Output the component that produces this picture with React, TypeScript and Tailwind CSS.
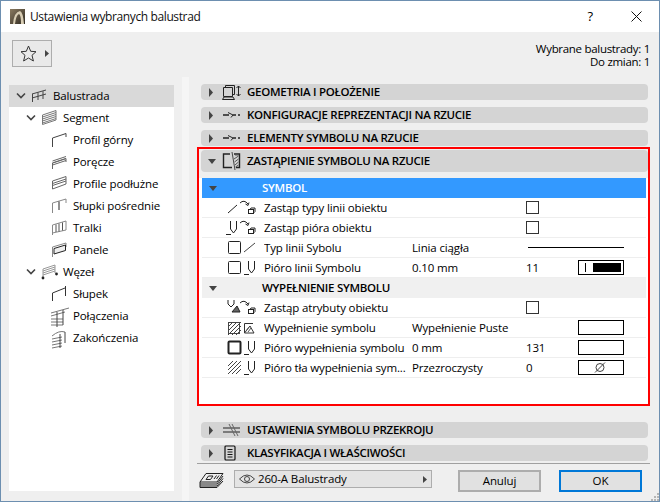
import React from "react";

const FONT = { fontFamily: '"Open Sans","Noto Sans",sans-serif' };

function Chev() {
  return (
    <svg width="10" height="8" viewBox="0 0 10 8" className="block">
      <path d="M1 1.5 L5 5.5 L9 1.5" fill="none" stroke="#444" strokeWidth="1.6" />
    </svg>
  );
}
function TriR() {
  return (
    <svg width="6" height="9" viewBox="0 0 6 9" className="block">
      <path d="M1 0 L5 4.5 L1 9 Z" fill="#444" />
    </svg>
  );
}
function TriD() {
  return (
    <svg width="8" height="5" viewBox="0 0 8 5" className="block">
      <path d="M0 0 H8 L4 5 Z" fill="#444" />
    </svg>
  );
}

const treeIcons: Record<string, React.ReactNode> = {
  balustrada: (
    <g stroke="#444" fill="none">
      <path d="M1 7 L15 3 M1 11 L15 7 M1.5 15 V7 M7 13 V5.5 M12 12 V4.2" />
    </g>
  ),
  segment: (
    <g stroke="#777" fill="none">
      <path d="M1.5 6 L15 1.5 V11 L1.5 15.5 Z" />
      <path d="M1.5 8 L15 3.5 M1.5 10 L15 5.5 M1.5 12 L15 7.5 M1.5 14 L15 9.5" />
    </g>
  ),
  profil: <path d="M1.5 16 V7 L15 2.5 V6" stroke="#444" fill="none" />,
  porecze: (
    <g stroke="#666" fill="none">
      <path d="M1.5 16 V10 L15 5.5 V9 M1.5 8 L15 3.5 M1.5 10 L15 5.5 M1.5 12 L15 7.5" />
    </g>
  ),
  podluzne: (
    <g stroke="#666" fill="none">
      <path d="M1.5 6 L15 1.5 V9 L1.5 14 Z M1.5 8.5 L15 4 M1.5 10.5 L15 6" />
    </g>
  ),
  slupki: (
    <g stroke="#666" fill="none">
      <path d="M1.5 16 V6 L15 2 V6" stroke="#888" />
      <path d="M8 4.5 V13" stroke="#222" />
    </g>
  ),
  tralki: (
    <g stroke="#555" fill="none">
      <path d="M1.5 16 V6 L15 2 V11 L1.5 14" stroke="#888" />
      <path d="M5 5.5 V13 M8 4.5 V12.5 M11.5 3.5 V11.5" />
    </g>
  ),
  panele: (
    <g fill="none">
      <path d="M1.5 16 V6 L15 2 V6" stroke="#888" />
      <path d="M3 7.5 L14.5 4 V9.5 L3 13 Z" stroke="#222" fill="#eee" />
    </g>
  ),
  wezel: (
    <g>
      <g stroke="#999" fill="none">
        <path d="M2 14 V6 L14 2 V10 M2 8 L14 4 M2 10 L14 6 M2 12 L14 8" />
      </g>
      <circle cx="2" cy="15" r="1.4" fill="#222" />
      <circle cx="15.5" cy="11" r="1.4" fill="#222" />
    </g>
  ),
  slupek: <path d="M1.5 16 V8 M1.5 8 L14 3 M14.5 1 V11" stroke="#333" fill="none" />,
  polaczenia: (
    <g stroke="#777" fill="none">
      <path d="M0 6 L18 1 M0 9 L14 5 M0 12 H12 M0 15 H12 M0 18 H12" />
      <path d="M6 5 V20 M12 3 V18" stroke="#444" />
    </g>
  ),
  zakonczenia: (
    <g stroke="#777" fill="none">
      <path d="M1 7 Q8 1 14 3 M1 10 L11 8 M1 13 L11 11 M1 16 L11 14 M1 19 L11 17" />
      <path d="M9 5 V19 M14 3 V14" stroke="#444" />
    </g>
  ),
};

function TreeRow({ level, open, icon, label, active }: { level: number; open?: boolean; icon: string; label: string; active?: boolean }) {
  const pl = level === 0 ? "pl-[7px]" : level === 1 ? "pl-[17px]" : "pl-[42px]";
  return (
    <div className={`flex h-[22px] items-center text-[11.5px] text-black ${pl} ${active ? "bg-[#d9d9d9]" : ""}`}>
      {open && (
        <span className="flex w-[15px] items-center">
          <Chev />
        </span>
      )}
      <svg width="16" height="18" viewBox="0 0 16 18" className="block overflow-visible">
        {treeIcons[icon]}
      </svg>
      <span className="ml-[6px] tracking-[-0.14px]">{label}</span>
    </div>
  );
}

const headerIcons: Record<string, React.ReactNode> = {
  geo: (
    <g fill="none" stroke="#222">
      <path d="M1.5 3.5 H10.5 V12.5 H1.5 Z M3.5 3.5 V1.5 H12.5 V10.5 H10.5" />
      <path d="M0.5 15.5 L2 13 H11 L12.5 15.5 Z" />
      <path d="M16.5 2 V12 M14.5 4 L16.5 2 L18.5 4 M14.5 10 L16.5 12 L18.5 10" />
    </g>
  ),
  konf: (
    <g fill="none" stroke="#222">
      <path d="M1 8 H7 M11 8 H14 M16 8 H18" strokeWidth="1.3" />
      <path d="M6 5.5 L11 8 L9 10.5" />
    </g>
  ),
  zast: (
    <g fill="none" stroke="#222">
      <path d="M8 4 H1.5 V17.5 H10 M12 4 H17.5 V17.5 H14" strokeWidth="1.4" />
      <path d="M10 2 L13 20" stroke="#222" strokeWidth="0.8" />
      <path d="M13 5 L16.5 5 M12 9 L16.5 6 M12.5 12 L16.5 9 M13 15 L16.5 12 M13.5 17 L16.5 15" stroke="#555" />
    </g>
  ),
  przek: (
    <g fill="none" stroke="#222">
      <path d="M1 6 H18 M1 10 H18" />
      <path d="M7 2 L13 14 M10 2 L16 14" stroke="#666" />
    </g>
  ),
  klas: (
    <g fill="none" stroke="#111">
      <rect x="3" y="1" width="10" height="14" rx="1" strokeWidth="1.2" />
      <path d="M5.5 4.5 H10.5 M5.5 7 H10.5 M5.5 9.5 H10.5 M5.5 12 H10.5" />
    </g>
  ),
};

function Header({ icon, label, tall, open }: { icon: string; label: string; tall?: boolean; open?: boolean }) {
  return (
    <div className={`flex items-center rounded-[4px] bg-[#d4d4d4] pl-[6px] ${tall ? "h-[22px]" : "h-[16px]"}`}>
      <span className="flex w-[15px] items-center pl-[1px]">{open ? <TriD /> : <TriR />}</span>
      <svg width="25" height={tall ? 22 : 16} viewBox={tall ? "0 0 25 22" : "0 0 25 16"} className="block shrink-0">
        {headerIcons[icon]}
      </svg>
      <span className="text-[11.5px] font-semibold tracking-[-0.28px] text-black">{label}</span>
    </div>
  );
}

const Arrow = () => (
  <g fill="none" stroke="#222">
    <path d="M14 5 Q18 1 22 6" />
    <path d="M19.5 6 L22 7.5 L23 4.5" />
    <rect x="22.5" y="11.5" width="5" height="4" />
    <path d="M24 11.5 L25 10 H29 V13.5 L27.5 15" />
  </g>
);
const Pen = ({ x = 22, y = 3 }: { x?: number; y?: number }) => (
  <g fill="none" stroke="#222">
    <path d={`M${x + 0.5} ${y} V${y + 8} L${x + 3.5} ${y + 12} L${x + 6.5} ${y + 8} V${y}`} />
    <path d={`M${x - 4} ${y + 13.5} H${x + 1}`} />
  </g>
);
const Sq = ({ w = 1 }: { w?: number }) => (
  <rect x="2.5" y="3.5" width="12" height="12" rx="1" fill="none" stroke="#222" strokeWidth={w} />
);
const Hatch = () => (
  <g stroke="#444" fill="none">
    <path d="M2 8 L7 3 M2 12 L11 3 M2 16 L15 3 M6 16 L15 7 M10 16 L15 11" />
  </g>
);

const rowIcons: Record<string, React.ReactNode> = {
  line: (
    <g>
      <path d="M2 15 L11 7" stroke="#222" fill="none" />
      <Arrow />
    </g>
  ),
  pen: (
    <g>
      <Pen x={4} y={3} />
      <Arrow />
    </g>
  ),
  sqline: (
    <g>
      <Sq />
      <path d="M18 14 L29 5" stroke="#444" fill="none" />
    </g>
  ),
  sqpen: (
    <g>
      <Sq />
      <Pen />
    </g>
  ),
  attr: (
    <g>
      <path d="M2 2 V6 L5 9 L8 6 V2" fill="none" stroke="#222" />
      <path d="M6 14 L11 8 L14 14 Z" fill="#666" stroke="#222" />
      <Arrow />
    </g>
  ),
  fill: (
    <g>
      <rect x="2.5" y="4.5" width="11" height="11" fill="none" stroke="#444" />
      <g transform="translate(0 1)">
        <Hatch />
      </g>
      <path d="M18.5 5.5 H27 M18.5 5.5 V15 H28 M18.5 15 L24 8 L28 15" fill="none" stroke="#333" />
      <path d="M20 13 L23 9 M22 14 L25 10" stroke="#555" />
    </g>
  ),
  sqfill: (
    <g>
      <Sq w={2} />
      <Pen />
    </g>
  ),
  hatchpen: (
    <g>
      <Hatch />
      <Pen />
    </g>
  ),
};

function Row({ icon, label, value, num, check, right }: { icon: string; label: string; value?: string; num?: string; check?: boolean; right?: React.ReactNode }) {
  return (
    <div className="flex h-[20px] items-center border-b border-[#eeeeee] pl-[24px] text-[11.5px] text-black">
      <svg width="32" height="20" viewBox="0 0 32 20" className="block shrink-0">
        {rowIcons[icon]}
      </svg>
      <span className="ml-[6px] w-[148px] shrink-0 truncate tracking-[-0.14px]">{label}</span>
      <span className="w-[114px] shrink-0 whitespace-nowrap tracking-[-0.14px]">{value}</span>
      <span className="flex w-[52px] shrink-0 items-center tracking-[-0.14px]">
        {check && <span className="block h-[13px] w-[13px] border border-[#333]" />}
        {num}
      </span>
      {right}
    </div>
  );
}

function Swatch({ children }: { children?: React.ReactNode }) {
  return <div className="relative flex h-[15px] w-[46px] items-center border border-black bg-white">{children}</div>;
}

export default function App() {
  return (
    <div style={FONT} className="flex h-[502px] w-[660px] flex-col overflow-hidden border border-[#6d8fb0] bg-[#efefef]">
      <div className="flex h-[31px] shrink-0 items-center bg-white pl-[9px]">
        <svg width="15" height="15" viewBox="0 0 15 15" className="block">
          <defs>
            <linearGradient id="lg" x1="0" y1="0" x2="1" y2="1">
              <stop offset="0" stopColor="#8a7a60" />
              <stop offset="1" stopColor="#2f2a22" />
            </linearGradient>
          </defs>
          <rect width="15" height="15" fill="url(#lg)" />
          <path d="M3 15 Q4 3 10 2 Q13 3 14 15 H11 Q11 6 9 5 Q6 6 5 15 Z" fill="#d8cdb4" />
        </svg>
        <span className="ml-[5px] text-[12px] tracking-[-0.38px] text-[#111]">Ustawienia wybranych balustrad</span>
        <span className="ml-auto text-[13px] text-black">?</span>
        <svg width="11" height="11" viewBox="0 0 11 11" className="ml-[38px] mr-[17px] block">
          <path d="M0.5 0.5 L10.5 10.5 M10.5 0.5 L0.5 10.5" stroke="#111" fill="none" />
        </svg>
      </div>

      <div className="flex h-[45px] shrink-0 justify-between pl-[11px] pr-[9px]">
        <div className="mt-[8px] flex h-[27px] w-[40px] items-center border border-[#adadad] bg-[#e9e9e9] pl-[7px]">
          <svg width="17" height="17" viewBox="0 0 17 17" className="block">
            <path d="M8.5 1 L10.7 6.3 L16 6.7 L12 10.3 L13.4 16 L8.5 13 L3.6 16 L5 10.3 L1 6.7 L6.3 6.3 Z" fill="none" stroke="#333" />
          </svg>
          <span className="ml-[8px]">
            <svg width="4" height="7" viewBox="0 0 4 7" className="block">
              <path d="M0 0 L4 3.5 L0 7 Z" fill="#444" />
            </svg>
          </span>
        </div>
        <div className="pt-[10px] text-right text-[11.5px] leading-[13px] tracking-[-0.3px] text-black">
          <div>Wybrane balustrady: 1</div>
          <div>Do zmian: 1</div>
        </div>
      </div>

      <div className="flex min-h-0 flex-1">
        <div className="w-[181px] shrink-0 pb-[10px] pl-[8px] pr-[8px] pt-[8px]">
          <div className="h-full bg-white">
            <TreeRow level={0} open active icon="balustrada" label="Balustrada" />
            <TreeRow level={1} open icon="segment" label="Segment" />
            <TreeRow level={2} icon="profil" label="Profil górny" />
            <TreeRow level={2} icon="porecze" label="Poręcze" />
            <TreeRow level={2} icon="podluzne" label="Profile podłużne" />
            <TreeRow level={2} icon="slupki" label="Słupki pośrednie" />
            <TreeRow level={2} icon="tralki" label="Tralki" />
            <TreeRow level={2} icon="panele" label="Panele" />
            <TreeRow level={1} open icon="wezel" label="Węzeł" />
            <TreeRow level={2} icon="slupek" label="Słupek" />
            <TreeRow level={2} icon="polaczenia" label="Połączenia" />
            <TreeRow level={2} icon="zakonczenia" label="Zakończenia" />
          </div>
        </div>
        <div className="w-[7px] shrink-0 bg-[#f5f5f5]" />
        <div className="flex min-w-0 flex-1 flex-col">
          <div className="flex flex-col gap-[7px] pl-[12px] pr-[11px] pt-[7px]">
            <Header icon="geo" label="GEOMETRIA I POŁOŻENIE" />
            <Header icon="konf" label="KONFIGURACJE REPREZENTACJI NA RZUCIE" />
            <Header icon="konf" label="ELEMENTY SYMBOLU NA RZUCIE" />
          </div>
          <div className="ml-[8px] mt-[1px] h-[259px] w-[453px] border-2 border-[#ff0000] bg-white">
            <div className="bg-[#efefef] pb-[6px] pl-[2px] pt-[1px]">
              <Header tall open icon="zast" label="ZASTĄPIENIE SYMBOLU NA RZUCIE" />
            </div>
            <div className="pl-[3px] pr-[2px]">
              <div className="flex h-[20px] items-center bg-[#3399ff] pl-[7px]">
                <span className="w-[53px]">
                  <TriD />
                </span>
                <span className="text-[11.5px] font-semibold tracking-[-0.28px] text-white">SYMBOL</span>
              </div>
              <Row icon="line" label="Zastąp typy linii obiektu" check />
              <Row icon="pen" label="Zastąp pióra obiektu" check />
              <Row
                icon="sqline"
                label="Typ linii Sybolu"
                value="Linia ciągła"
                right={<span className="ml-[-50px] block h-[1px] w-[96px] bg-black" />}
              />
              <Row
                icon="sqpen"
                label="Pióro linii Symbolu"
                value="0.10 mm"
                num="11"
                right={
                  <Swatch>
                    <span className="ml-[6px] block h-[9px] w-[1px] bg-black" />
                    <span className="ml-[7px] block h-[9px] w-[28px] bg-black" />
                  </Swatch>
                }
              />
              <div className="flex h-[20px] items-center bg-[#f0f0f0] pl-[7px]">
                <span className="w-[53px]">
                  <TriD />
                </span>
                <span className="text-[11.5px] font-semibold tracking-[-0.28px] text-black">WYPEŁNIENIE SYMBOLU</span>
              </div>
              <Row icon="attr" label="Zastąp atrybuty obiektu" check />
              <Row icon="fill" label="Wypełnienie symbolu" value="Wypełnienie Puste" right={<Swatch />} />
              <Row icon="sqfill" label="Pióro wypełnienia symbolu" value="0 mm" num="131" right={<Swatch />} />
              <Row
                icon="hatchpen"
                label="Pióro tła wypełnienia sym..."
                value="Przezroczysty"
                num="0"
                right={
                  <Swatch>
                    <svg width="44" height="13" viewBox="0 0 44 13" className="block">
                      <circle cx="21" cy="6.5" r="4" fill="none" stroke="#444" />
                      <path d="M16 11.5 L26 1.5" stroke="#444" />
                    </svg>
                  </Swatch>
                }
              />
            </div>
          </div>
          <div className="flex flex-col gap-[7px] pl-[12px] pr-[11px] pt-[16px]">
            <Header icon="przek" label="USTAWIENIA SYMBOLU PRZEKROJU" />
            <Header icon="klas" label="KLASYFIKACJA I WŁAŚCIWOŚCI" />
          </div>
          <div className="ml-[8px] mr-[9px] mt-[2px] h-[1px] bg-[#a0a0a0]" />
          <div className="relative flex flex-1 items-start pl-[10px] pt-[6px]">
            <svg width="25" height="16" viewBox="0 0 25 16" className="mt-[2px] block shrink-0">
              <g fill="none" stroke="#222">
                <path d="M1 10 L7 1.5 H24 L18 10 Z" />
                <path d="M1 10 V12 H18 L24 4 M1 12 V14 H18 L24 6.5 M1 14 V15.5 H18 L24 9" />
                <path d="M7 7.5 L9.5 4 H14 L11.5 7.5 Z M15 7 L17.5 3.5 M17.5 7 L20 3.5" />
              </g>
            </svg>
            <div className="ml-[10px] flex h-[18px] w-[198px] items-center border border-[#adadad] bg-[#e4e4e4] pl-[4px] pr-[4px] text-[11.5px] tracking-[-0.14px] text-black">
              <svg width="16" height="10" viewBox="0 0 16 10" className="block shrink-0">
                <path d="M0.5 5 Q8 -3 15.5 5 Q8 13 0.5 5 Z" fill="none" stroke="#444" />
                <circle cx="8" cy="5" r="2.5" fill="none" stroke="#444" />
              </svg>
              <span className="ml-[3px]">260-A Balustrady</span>
              <span className="ml-auto">
                <svg width="4" height="7" viewBox="0 0 4 7" className="block">
                  <path d="M0 0 L4 3.5 L0 7 Z" fill="#444" />
                </svg>
              </span>
            </div>
            <button className="ml-[26px] h-[22px] w-[83px] border-2 border-[#adadad] bg-[#e1e1e1] text-[11.5px] tracking-[-0.14px] text-black">Anuluj</button>
            <button className="ml-[18px] h-[22px] w-[83px] border-2 border-[#0078d7] bg-[#e1e1e1] text-[11.5px] text-black">OK</button>
            <svg width="9" height="9" viewBox="0 0 9 9" className="absolute bottom-[0px] right-[0px] block">
              <path d="M7 1h2v2H7z M4 4h2v2H4z M7 4h2v2H7z M1 7h2v2H1z M4 7h2v2H4z M7 7h2v2H7z" fill="#b5b5b5" />
            </svg>
          </div>
        </div>
      </div>
    </div>
  );
}
